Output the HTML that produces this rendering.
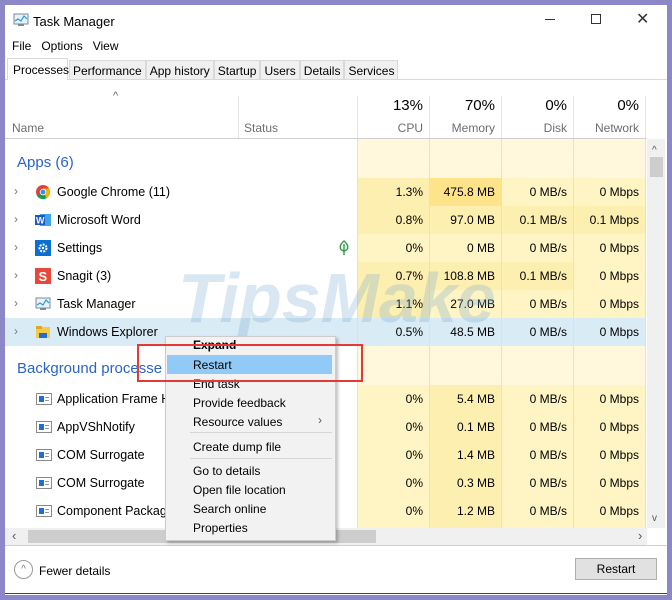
<!DOCTYPE html><html><head><style>
*{margin:0;padding:0;box-sizing:border-box}
body{width:672px;height:600px;background:#8c87c9;font-family:"Liberation Sans",sans-serif;font-size:12px;color:#000;position:relative;overflow:hidden}
.a{position:absolute;white-space:nowrap}
#w{position:absolute;left:5px;top:5px;width:662px;height:590px;background:#fff}
.r{text-align:right}
.gr{color:#6d6d6d}
.mi{position:absolute;left:193px;font-size:12px}
</style></head><body>
<div id="w"></div>
<svg class="a" style="left:13px;top:13px" width="16" height="14"><rect x="1" y="1" width="14" height="10" fill="#e8f2f8" stroke="#7a8a99"/><polyline points="2,8 5,6 8,8 11,3 14,6" fill="none" stroke="#2a9ad6" stroke-width="1.2"/><rect x="5" y="11" width="6" height="2" fill="#7a8a99"/></svg>
<div class="a" style="left:33px;top:14px;font-size:13px">Task Manager</div>
<div class="a" style="left:545px;top:19px;width:10px;border-top:1px solid #333"></div>
<div class="a" style="left:591px;top:14px;width:10px;height:10px;border:1px solid #333"></div>
<div class="a" style="left:636px;top:9px;font-size:16px;color:#333">✕</div>
<div class="a" style="left:12px;top:39px">File&nbsp;&nbsp; Options&nbsp;&nbsp; View</div>
<div class="a" style="left:5px;top:79px;width:662px;border-top:1px solid #d9d9d9"></div>
<div class="a" style="left:7px;top:58px;width:61px;height:22px;background:#fff;border:1px solid #d9d9d9;border-bottom:none;padding:4px 0 0 5px">Processes</div>
<div class="a" style="left:69px;top:60px;height:20px;display:flex">
<div style="background:#f0f0f0;border:1px solid #d9d9d9;padding:3px 3px">Performance</div>
<div style="background:#f0f0f0;border:1px solid #d9d9d9;padding:3px 3px">App history</div>
<div style="background:#f0f0f0;border:1px solid #d9d9d9;padding:3px 3px">Startup</div>
<div style="background:#f0f0f0;border:1px solid #d9d9d9;padding:3px 3px">Users</div>
<div style="background:#f0f0f0;border:1px solid #d9d9d9;padding:3px 3px">Details</div>
<div style="background:#f0f0f0;border:1px solid #d9d9d9;padding:3px 3px">Services</div></div>
<div class="a" style="left:113px;top:90px;color:#666;font-size:11px">^</div>
<div class="a gr" style="left:12px;top:121px">Name</div>
<div class="a" style="left:238px;top:96px;height:42px;border-left:1px solid #e5e5e5"></div>
<div class="a gr" style="left:244px;top:121px">Status</div>
<div class="a" style="left:357px;top:96px;height:42px;border-left:1px solid #e5e5e5"></div>
<div class="a" style="left:429px;top:96px;height:42px;border-left:1px solid #e5e5e5"></div>
<div class="a" style="left:501px;top:96px;height:42px;border-left:1px solid #e5e5e5"></div>
<div class="a" style="left:573px;top:96px;height:42px;border-left:1px solid #e5e5e5"></div>
<div class="a" style="left:645px;top:96px;height:42px;border-left:1px solid #e5e5e5"></div>
<div class="a r" style="left:357px;width:66px;top:97px;font-size:15px">13%</div>
<div class="a r" style="left:429px;width:66px;top:97px;font-size:15px">70%</div>
<div class="a r" style="left:501px;width:66px;top:97px;font-size:15px">0%</div>
<div class="a r" style="left:573px;width:66px;top:97px;font-size:15px">0%</div>
<div class="a r gr" style="left:357px;width:66px;top:121px">CPU</div>
<div class="a r gr" style="left:429px;width:66px;top:121px">Memory</div>
<div class="a r gr" style="left:501px;width:66px;top:121px">Disk</div>
<div class="a r gr" style="left:573px;width:66px;top:121px">Network</div>
<div class="a" style="left:5px;top:138px;width:642px;border-top:1px solid #d0d0d0"></div>
<div class="a" style="left:357px;top:139px;width:289px;height:389px;background:#fff8dc"></div>
<div class="a" style="left:429px;top:385px;width:72px;height:143px;background:#fcefb0"></div>
<div class="a" style="left:357px;top:385px;width:72px;height:143px;background:#fff4c4"></div>
<div class="a" style="left:501px;top:385px;width:145px;height:143px;background:#fff4c4"></div>
<div id="rows"></div>
<div class="a" style="left:17px;top:154px;font-size:15px;color:#2a64c8">Apps (6)</div>
<div class="a" style="left:17px;top:360px;font-size:15px;color:#2a64c8">Background processe</div>
<div class="a" style="left:647px;top:139px;width:18px;height:389px;background:#f0f0f0"></div>
<div class="a" style="left:652px;top:145px;font-size:10px;color:#555">^</div>
<div class="a" style="left:650px;top:157px;width:13px;height:20px;background:#cdcdcd"></div>
<div class="a" style="left:652px;top:513px;font-size:10px;color:#555">v</div>
<div class="a" style="left:5px;top:528px;width:642px;height:17px;background:#f0f0f0"></div>
<div class="a" style="left:12px;top:528px;color:#555;font-size:13px">‹</div>
<div class="a" style="left:28px;top:530px;width:348px;height:13px;background:#cdcdcd"></div>
<div class="a" style="left:638px;top:528px;color:#555;font-size:13px">›</div>
<div class="a" style="left:5px;top:545px;width:662px;border-top:1px solid #d0d0d0"></div>
<div class="a" style="left:14px;top:560px;width:19px;height:19px;border:1px solid #999;border-radius:50%;text-align:center;color:#777;font-size:10px;line-height:18px">^</div>
<div class="a" style="left:39px;top:564px">Fewer details</div>
<div class="a" style="left:575px;top:558px;width:82px;height:22px;background:#e1e1e1;border:1px solid #adadad;text-align:center;line-height:20px">Restart</div>
<div class="a" style="left:5px;top:593px;width:662px;border-top:1px solid #444"></div>
<div class="a" style="left:178px;top:258px;font-size:70px;font-weight:bold;font-style:italic;color:rgba(120,170,210,.28)">TipsMake</div>
<div class="a" style="left:165px;top:336px;width:171px;height:205px;background:#f2f2f2;border:1px solid #ccc;box-shadow:2px 2px 3px rgba(0,0,0,.25)"></div>
<div class="a" style="left:167px;top:355px;width:165px;height:19px;background:#91c9f7"></div>
<div class="mi a" style="top:338px;font-weight:bold">Expand</div>
<div class="mi a" style="top:358px">Restart</div>
<div class="mi a" style="top:377px">End task</div>
<div class="mi a" style="top:396px">Provide feedback</div>
<div class="mi a" style="top:415px">Resource values</div>
<div class="a" style="left:318px;top:413px;color:#555">›</div>
<div class="a" style="left:190px;top:432px;width:142px;border-top:1px solid #d6d6d6"></div>
<div class="mi a" style="top:440px">Create dump file</div>
<div class="a" style="left:190px;top:458px;width:142px;border-top:1px solid #d6d6d6"></div>
<div class="mi a" style="top:464px">Go to details</div>
<div class="mi a" style="top:483px">Open file location</div>
<div class="mi a" style="top:502px">Search online</div>
<div class="mi a" style="top:521px">Properties</div>
<div class="a" style="left:137px;top:344px;width:226px;height:38px;border:2px solid #e53935"></div>
<script>
var rows=[
["Google Chrome (11)","1.3%","475.8 MB","0 MB/s","0 Mbps",192,"chrome",["#fcefb0","#ffe38a","#fff4c4","#fff4c4"]],
["Microsoft Word","0.8%","97.0 MB","0.1 MB/s","0.1 Mbps",220,"word",["#fcefb0","#fcefb0","#fcefb0","#fcefb0"]],
["Settings","0%","0 MB","0 MB/s","0 Mbps",248,"set",["#fff4c4","#fff4c4","#fff4c4","#fff4c4"]],
["Snagit (3)","0.7%","108.8 MB","0.1 MB/s","0 Mbps",276,"snag",["#fcefb0","#fcefb0","#fcefb0","#fff4c4"]],
["Task Manager","1.1%","27.0 MB","0 MB/s","0 Mbps",304,"tm",["#fcefb0","#fff4c4","#fff4c4","#fff4c4"]],
["Windows Explorer","0.5%","48.5 MB","0 MB/s","0 Mbps",332,"exp",null],
["Application Frame H","0%","5.4 MB","0 MB/s","0 Mbps",399,"bg",0],
["AppVShNotify","0%","0.1 MB","0 MB/s","0 Mbps",427,"bg",0],
["COM Surrogate","0%","1.4 MB","0 MB/s","0 Mbps",455,"bg",0],
["COM Surrogate","0%","0.3 MB","0 MB/s","0 Mbps",483,"bg",0],
["Component Package","0%","1.2 MB","0 MB/s","0 Mbps",511,"bg",0]];
var icons={chrome:'<svg width="16" height="16"><circle cx="8" cy="8" r="7" fill="#db4437"/><path d="M8 8 L1.9 11.5 A7 7 0 0 0 11.5 14.1Z" fill="#0f9d58"/><path d="M8 8 L11.5 14.1 A7 7 0 0 0 14.1 4.5 L8 4.5Z" fill="#f4b400"/><circle cx="8" cy="8" r="3.2" fill="#fff"/><circle cx="8" cy="8" r="2.4" fill="#4285f4"/></svg>',
word:'<svg width="16" height="16"><rect x="5" y="2" width="11" height="12" fill="#41a5ee"/><rect x="0" y="3" width="10" height="10" fill="#185abd"/><text x="1" y="11.5" font-size="9" font-weight="bold" fill="#fff" font-family="Liberation Sans">W</text></svg>',
set:'<svg width="16" height="16"><rect width="16" height="16" fill="#0a6fd1"/><circle cx="8" cy="8" r="3.5" fill="none" stroke="#fff" stroke-width="2" stroke-dasharray="2 1.2"/><circle cx="8" cy="8" r="1.2" fill="#fff"/></svg>',
snag:'<svg width="16" height="16"><rect width="16" height="16" fill="#e8483a"/><text x="3.5" y="13" font-size="13" font-weight="bold" fill="#fff" font-family="Liberation Sans">S</text></svg>',
tm:'<svg width="16" height="16"><rect x="1" y="2" width="14" height="10" fill="#e8f2f8" stroke="#7a8a99"/><polyline points="2,9 5,7 8,9 11,4 14,7" fill="none" stroke="#2a9ad6" stroke-width="1.2"/><rect x="5" y="12" width="6" height="2" fill="#7a8a99"/></svg>',
exp:'<svg width="16" height="16"><rect x="1" y="3" width="14" height="11" fill="#f7c948"/><rect x="1" y="2" width="6" height="3" fill="#e0a826"/><rect x="4" y="9" width="8" height="5" fill="#1e6fd0"/></svg>',
bg:'<svg width="16" height="16"><rect x="0.5" y="2.5" width="15" height="11" fill="#fff" stroke="#8a8a8a"/><rect x="3" y="5" width="5" height="6" fill="#1e6fd0"/><rect x="9" y="6" width="4" height="1" fill="#999"/><rect x="9" y="9" width="4" height="1" fill="#999"/></svg>'};
var h='';
rows.forEach(function(r,i){var t=r[5]-14;
 if(r[6]=='exp'){h+='<div class="a" style="left:5px;top:'+t+'px;width:641px;height:28px;background:#d9ebf5"></div>';}
 else if(r[7]){for(var k=0;k<4;k++)h+='<div class="a" style="left:'+(357+72*k)+'px;top:'+t+'px;width:72px;height:28px;background:'+r[7][k]+'"></div>';}
 if(i<6)h+='<div class="a" style="left:14px;top:'+(r[5]-8)+'px;color:#777;font-size:12px">›</div>';
 h+='<div class="a" style="left:'+(r[6]=='bg'?36:35)+'px;top:'+(r[5]-8)+'px;height:16px">'+icons[r[6]]+'</div>';
 h+='<div class="a" style="left:57px;top:'+(r[5]-7)+'px;font-size:12.5px">'+r[0]+'</div>';
 for(var k=0;k<4;k++)h+='<div class="a r" style="left:'+(357+72*k)+'px;width:66px;top:'+(r[5]-7)+'px">'+r[1+k]+'</div>';
});
for(var k=0;k<5;k++)h+='<div class="a" style="left:'+(357+72*k)+'px;top:139px;height:389px;border-left:1px solid #f0e2b0"></div>';
h+='<svg class="a" style="left:338px;top:240px" width="12" height="16"><path d="M6 1 C1 5 1 10 6 11 C11 10 11 5 6 1Z M6 4 V15" fill="none" stroke="#2e9a3e" stroke-width="1.4"/></svg>';
document.getElementById('rows').innerHTML=h;
</script>
</body></html>
